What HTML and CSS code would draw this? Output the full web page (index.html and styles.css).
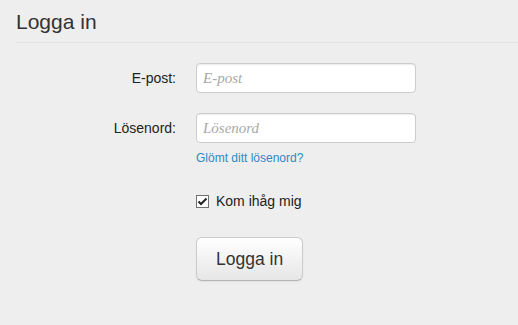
FILE: index.html
```html
<!DOCTYPE html>
<html lang="sv">
<head>
    <meta charset="UTF-8">
    <meta name="viewport" content="width=device-width, initial-scale=1.0">
    <title>Logga in</title>
    <link rel="stylesheet" href="styles.css">
</head>
<body>
    <form class="login-form">
        <div class="legend">Logga in</div>

        <div class="control-group">
            <label class="control-label" for="email">E-post:</label>
            <div class="controls">
                <input type="text" id="email" placeholder="E-post">
            </div>
        </div>

        <div class="control-group">
            <label class="control-label" for="password">Lösenord:</label>
            <div class="controls">
                <input type="password" id="password" placeholder="Lösenord">
                <a class="help-link" href="#">Glömt ditt lösenord?</a>
            </div>
        </div>

        <div class="control-group remember">
            <div class="controls">
                <label class="checkbox">
                    <span class="check-box">
                        <svg width="11" height="11" viewBox="0 0 11 11">
                            <path d="M1.5 5.5 L4 8 L9.5 2.5" fill="none" stroke="#222" stroke-width="2"/>
                        </svg>
                    </span>
                    Kom ihåg mig
                </label>
            </div>
        </div>

        <div class="control-group">
            <div class="controls">
                <button type="submit" class="btn-large">Logga in</button>
            </div>
        </div>
    </form>
</body>
</html>
```

FILE: styles.css
```css
body {
    margin: 0;
    background-color: #eeeeee;
    font-family: "Liberation Sans", Arial, sans-serif;
    font-size: 14px;
    line-height: 20px;
    color: #333;
}
.login-form {
    padding: 2px 0 0 16px;
}
.legend {
    font-size: 21px;
    line-height: 40px;
    color: #333;
    border-bottom: 1px solid #e2e2e2;
    margin-bottom: 20px;
}
.control-group {
    display: flex;
    margin-bottom: 20px;
}
.control-label {
    width: 160px;
    padding-top: 5px;
    text-align: right;
    color: #222;
}
.controls {
    margin-left: 20px;
}
.remember .controls,
.control-group:last-child .controls {
    margin-left: 180px;
}
input[type="text"], input[type="password"] {
    display: block;
    box-sizing: border-box;
    width: 220px;
    height: 30px;
    padding: 4px 6px;
    margin: 0;
    border: 1px solid #ccc;
    border-radius: 4px;
    background-color: #fff;
    box-shadow: inset 0 1px 1px rgba(0, 0, 0, 0.075);
    font-family: "Liberation Sans", Arial, sans-serif;
    font-size: 14px;
    color: #555;
}
input::placeholder {
    font-family: "Liberation Serif", Georgia, serif;
    font-style: italic;
    font-size: 15px;
    color: #a8a8a8;
}
.help-link {
    display: block;
    margin-top: 7px;
    font-size: 12px;
    line-height: 16px;
    color: #2f89c4;
    text-decoration: none;
}
.remember {
    margin-top: 25px;
    margin-bottom: 26px;
}
.checkbox {
    display: flex;
    align-items: center;
    color: #222;
}
.check-box {
    display: flex;
    align-items: center;
    justify-content: center;
    box-sizing: border-box;
    width: 13px;
    height: 13px;
    margin-right: 7px;
    border: 1px solid #707070;
    background: #fff;
}
.btn-large {
    padding: 11px 19px;
    font-family: "Liberation Sans", Arial, sans-serif;
    font-size: 17.5px;
    line-height: 20px;
    color: #333;
    background-image: linear-gradient(to bottom, #ffffff, #e6e6e6);
    border: 1px solid #cccccc;
    border-bottom-color: #b3b3b3;
    border-radius: 6px;
    box-shadow: inset 0 1px 0 rgba(255, 255, 255, 0.2), 0 1px 2px rgba(0, 0, 0, 0.05);
    cursor: pointer;
}
```
